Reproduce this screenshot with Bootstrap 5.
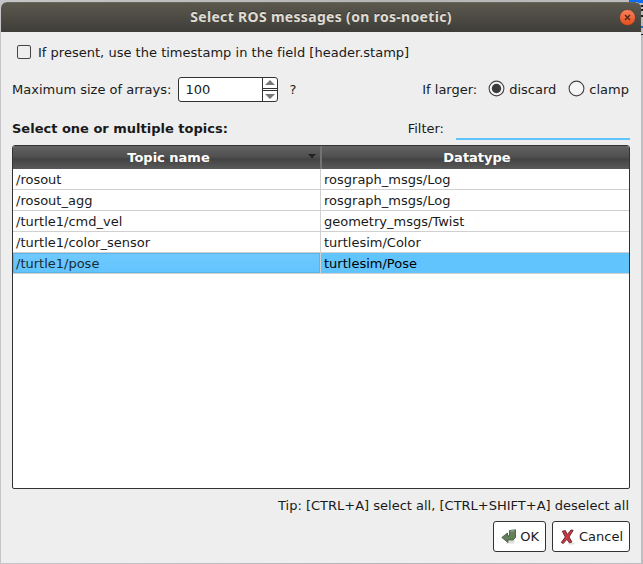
<!DOCTYPE html>
<html lang="en">
<head>
<meta charset="utf-8">
<title>Select ROS messages</title>
<link href="https://cdn.jsdelivr.net/npm/bootstrap@5.3.0/dist/css/bootstrap.min.css" rel="stylesheet">
<style>
body{width:643px;height:564px;overflow:hidden;background:linear-gradient(90deg,#c6c6c8,#b5b5b8 60%,#bdbdbf);font:13px/20px "DejaVu Sans",sans-serif;color:#1a1a1a;padding:2px 2px 1px 1px}
.backdrop-strip{left:629px;top:0;width:14px;height:36px}
.dialog{width:640px;height:561px;background:#eee;border-radius:6px 6px 0 0;overflow:hidden;position:relative}
.titlebar{height:30px;background:linear-gradient(#5b584e,#3e3d38);border-top:1px solid #68655b;padding:0 5px 0 22px}
.titlebar h1{font:700 14px/27px "Noto Sans","Open Sans",sans-serif;letter-spacing:.32px;color:#dfdbd2;text-shadow:0 -1px #34332e;white-space:nowrap;padding-bottom:2px}
.dialog-main{padding:10px 11px 11px}
.row-check{height:20px;padding-left:5px}
.row-check .caption{padding-top:1px;letter-spacing:.015px}
.tick{width:14px;height:14px;border:1px solid #444;border-radius:2px;margin-right:7px}
.row-size{height:25px;margin-top:15px;padding-right:1px}
.spin{width:100px;height:25px;border:1px solid #333;border-radius:3px;background:#fff;margin-left:7px;overflow:hidden;line-height:23px}
.spin-value{padding-left:6px}
.spin-keys{width:15px;border-left:1px solid #333}
.spin-keys svg{display:block}
.help-mark{margin-left:11px}
.dial-first{margin:0 4px 2px 11px}
.dial-next{margin:0 4px 2px 12px}
.row-filter{height:22px;margin-top:16px}
.filter-box{width:174px;height:21px;border:0;border-bottom:2px solid #62c4fd;background:transparent;margin-left:12px;padding:0;outline:0;border-radius:0}
.topics{height:344px;margin-top:5px;border:1px solid #333;border-radius:3px 3px 2px 2px;background:#fff;overflow:hidden}
.topics-head{height:23px;background:linear-gradient(#636363,#4f4f4f 48%,#434343 56%,#595959);color:#fff;font-weight:700;line-height:23px;text-align:center}
.cell-a{width:308px;border-right:1px solid #d0d0d0;padding-left:3px}
.cell-b{width:308px;padding-left:3px}
.topics-head .cell-a{width:309px;border-right:2px solid #737373;padding-left:4px;position:relative}
.topics-head .cell-b{width:307px;padding-left:3px}
.sort-arrow{position:absolute;right:4px;top:8px}
.topic{height:21px;border-bottom:1px solid #d0d0d0;line-height:21px}
.topic.picked{background:#62c4fd;color:#000}
.picked .cell-a{background:linear-gradient(#6fc9fd,#62c4fd);box-shadow:inset 0 0 0 1px #5ab4e8;color:#1a2b38}
.tip{height:20px;margin-top:7px;padding-right:1px;text-align:right}
.actions{margin-top:5px;gap:6px}
.push{height:31px;border:1px solid #333;border-radius:3px;background:#fff;color:#1a1a1a;font:inherit;padding:0 6px 0 7px}
.push svg{margin-right:3px;flex:none}
</style>
<script src="https://cdn.jsdelivr.net/npm/bootstrap@5.3.0/dist/js/bootstrap.bundle.min.js"></script>
</head>
<body>
<svg class="backdrop-strip position-absolute" viewBox="0 0 14 36"><path d="M0 0H14V2H0Z" fill="#0b6cf2"/><path d="M9 0H14V3H9Z" fill="#0b6cf2"/><path d="M11 6h3M11 10h3M12 16h2" stroke="#222" stroke-width="2"/><path d="M11 27h3" stroke="#0b6cf2" stroke-width="2"/><path d="M11 34.500h3" stroke="#222"/></svg>
<div class="dialog">
  <header class="titlebar d-flex align-items-center">
    <h1 class="flex-grow-1 text-center m-0">Select ROS messages (on ros-noetic)</h1>
    <svg width="17" height="17" viewBox="0 0 17 17"><defs><linearGradient id="o" x2="0" y2="1"><stop stop-color="#fa8260"/><stop offset="1" stop-color="#e54e1b"/></linearGradient></defs><circle cx="8.500" cy="8.500" r="8" fill="url(#o)" stroke="#4a3b31" stroke-width=".7"/><path d="M6 6l5 5M11 6l-5 5" stroke="#4c2415" stroke-width="1.300"/></svg>
  </header>
  <main class="dialog-main d-flex flex-column">
    <div class="row-check d-flex align-items-center"><span class="tick"></span><span class="caption">If present, use the timestamp in the field [header.stamp]</span></div>
    <div class="row-size d-flex align-items-center">
      <span>Maximum size of arrays:</span>
      <div class="spin d-flex"><span class="spin-value flex-grow-1">100</span>
        <span class="spin-keys"><svg width="14" height="23" viewBox="0 0 14 23"><path d="M2 7L7 2l5 5Z M2 16h10l-5 5Z" fill="#777"/><path d="M0 10.500h14M0 12.500h14" stroke="#333"/></svg></span></div>
      <span class="help-mark">?</span>
      <span class="ms-auto">If larger:</span>
      <svg class="dial-first" width="17" height="17" viewBox="0 0 17 17"><circle cx="8.500" cy="8.500" r="7.400" fill="#f5f5f5" stroke="#444" stroke-width="1.100"/><circle cx="8.500" cy="8.500" r="4.700" fill="#3b3b3b"/></svg>
      <span>discard</span>
      <svg class="dial-next" width="17" height="17" viewBox="0 0 17 17"><circle cx="8.500" cy="8.500" r="7.400" fill="#f5f5f5" stroke="#444" stroke-width="1.100"/></svg>
      <span>clamp</span>
    </div>
    <div class="row-filter d-flex align-items-center"><b>Select one or multiple topics:</b><span class="ms-auto">Filter:</span><input class="filter-box" aria-label="Filter"></div>
    <section class="topics">
      <div class="topics-head d-flex"><div class="cell-a">Topic name<svg class="sort-arrow" width="8" height="5" viewBox="0 0 8 5"><path d="M0 0h8L4 4.500Z" fill="#222"/></svg></div><div class="cell-b">Datatype</div></div>
      <div class="topic d-flex"><div class="cell-a">/rosout</div><div class="cell-b">rosgraph_msgs/Log</div></div>
      <div class="topic d-flex"><div class="cell-a">/rosout_agg</div><div class="cell-b">rosgraph_msgs/Log</div></div>
      <div class="topic d-flex"><div class="cell-a">/turtle1/cmd_vel</div><div class="cell-b">geometry_msgs/Twist</div></div>
      <div class="topic d-flex"><div class="cell-a">/turtle1/color_sensor</div><div class="cell-b">turtlesim/Color</div></div>
      <div class="topic picked d-flex"><div class="cell-a">/turtle1/pose</div><div class="cell-b">turtlesim/Pose</div></div>
    </section>
    <div class="tip">Tip: [CTRL+A] select all, [CTRL+SHIFT+A] deselect all</div>
    <div class="actions d-flex justify-content-end">
      <button class="push d-flex align-items-center"><svg width="16" height="16" viewBox="0 0 16 16"><path d="M4 14.500h9l1-4-4 1Z" fill="#ddd"/><path d="M8.500 1.500L14.500.8V8.500L12 11H7V13.500L.8 8.500 6.500 4V6.800H8.500Z" fill="#64805a" stroke="#3b4f36" stroke-width=".8"/><path d="M9.500 2.200L13.500 1.700" stroke="#a0b598"/></svg>OK</button>
      <button class="push d-flex align-items-center"><svg width="16" height="16" viewBox="0 0 16 16"><path d="M9 14h6l-1 1.500H8Z" fill="#ddd"/><path d="M2.300 2.300L5.300 1.500 7.300 5.500 11 1 13.200 1.300 9 8 12 13 9.300 13.800 6.900 10.300 3.300 14.500 1.300 13.500 5.300 8Z" fill="#c73a43" stroke="#6b2026" stroke-width=".9"/></svg>Cancel</button>
    </div>
  </main>
</div>
</body>
</html>
